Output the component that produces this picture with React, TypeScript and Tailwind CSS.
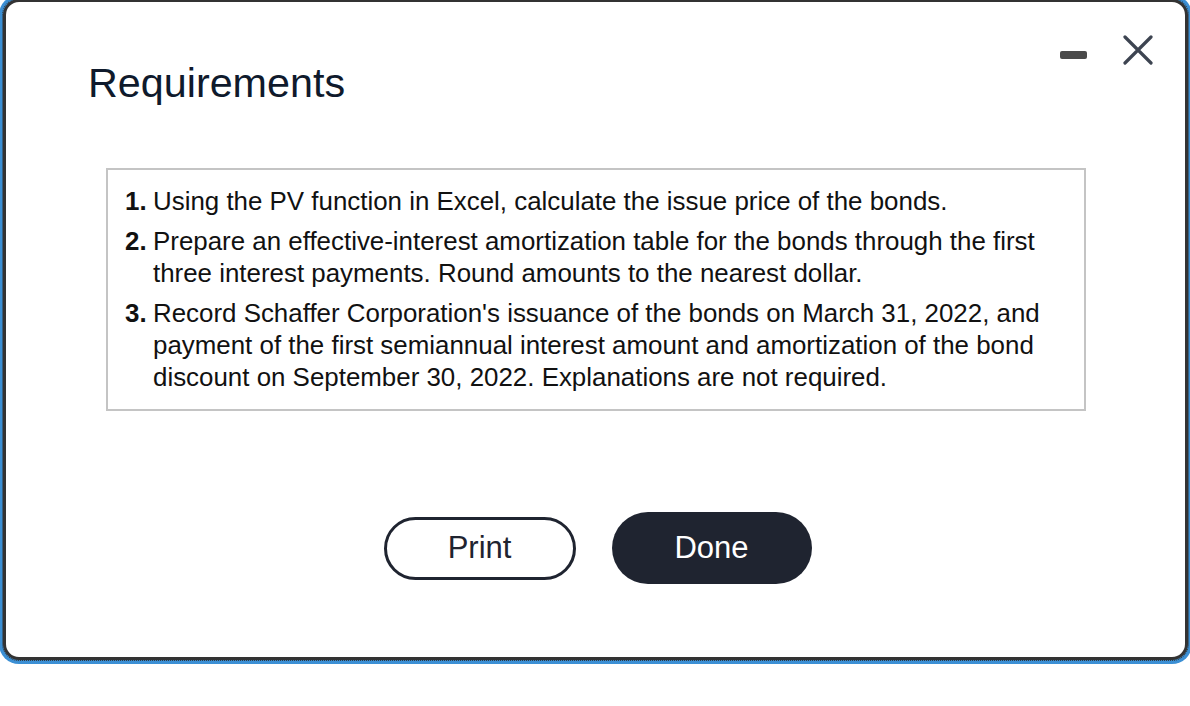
const items: string[][] = [
  ["Using the PV function in Excel, calculate the issue price of the bonds."],
  [
    "Prepare an effective-interest amortization table for the bonds through the first",
    "three interest payments. Round amounts to the nearest dollar.",
  ],
  [
    "Record Schaffer Corporation's issuance of the bonds on March 31, 2022, and",
    "payment of the first semiannual interest amount and amortization of the bond",
    "discount on September 30, 2022. Explanations are not required.",
  ],
];

function CloseIcon() {
  return (
    <svg width="30" height="30" viewBox="0 0 30 30" fill="none" className="text-[#3d4451]">
      <path d="M2 2L28 28M28 2L2 28" stroke="currentColor" strokeWidth="3.2" strokeLinecap="round" />
    </svg>
  );
}

export default function App() {
  return (
    <div className="h-[706px] w-[1190px] overflow-hidden bg-white font-['Liberation_Sans',Arial,sans-serif]">
      <div className="ml-[3px] mt-[-1px] flex h-[661px] w-[1185px] flex-col rounded-[16px] border-[3px] border-[#333333] bg-white shadow-[0_0_0_4px_#3b8fd4] outline-1 outline-dotted outline-offset-0 outline-[#333333]">
        <div className="flex items-start justify-between">
          <h1 className="ml-[82px] mt-[59px] text-[41.3px] leading-[44px] text-[#0f1a2c]">Requirements</h1>
          <div className="mr-[32px] mt-[33px] flex items-start gap-[36px]">
            <span className="mt-[16px] block h-[8px] w-[27px] rounded-[2px] bg-[#4a4a4a]" />
            <CloseIcon />
          </div>
        </div>

        <div className="ml-[100px] mt-[63px] w-[980px] border-2 border-[#c4c4c4] pb-[16px] pl-[17px] pr-[10px] pt-[15px]">
          <ol className="flex flex-col gap-[8px] text-[25.9px] leading-[32px] text-[#111111]">
            {items.map((lines, i) => (
              <li key={i} className="flex">
                <span className="w-[28px] shrink-0 font-bold">{i + 1}.</span>
                <span className="flex flex-col whitespace-nowrap">
                  {lines.map((l) => (
                    <span key={l}>{l}</span>
                  ))}
                </span>
              </li>
            ))}
          </ol>
        </div>

        <div className="mt-[101px] flex items-center justify-center gap-[36px] pl-[4px]">
          <button className="h-[63px] w-[192px] rounded-full border-[3px] border-[#1f2430] bg-white text-[31px] text-[#1f2430]">
            Print
          </button>
          <button className="h-[72px] w-[200px] rounded-full bg-[#1f2430] text-[31px] text-white">
            Done
          </button>
        </div>
      </div>
    </div>
  );
}
